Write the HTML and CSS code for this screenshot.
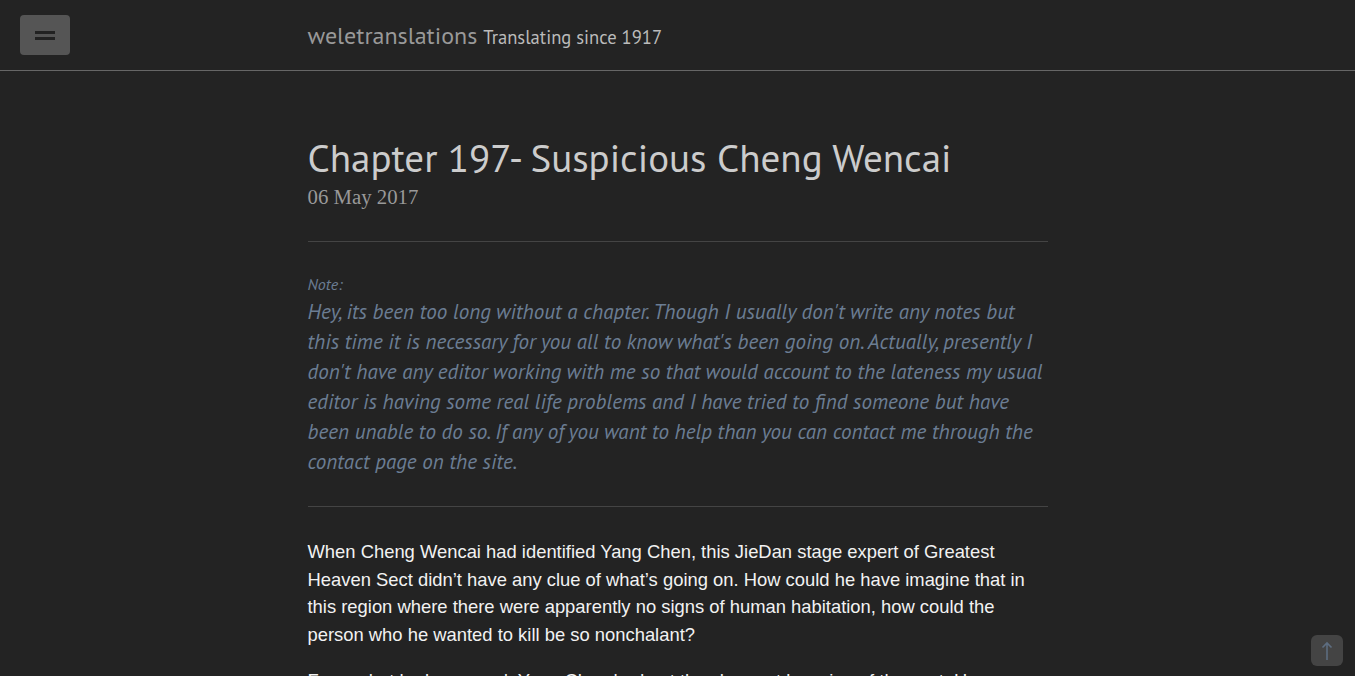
FILE: index.html
```html
<!DOCTYPE html>
<html lang="en">
<head>
<meta charset="utf-8">
<title>Chapter 197- Suspicious Cheng Wencai</title>
<link rel="stylesheet" href="styles.css">
</head>
<body>
<header class="site-header">
  <button class="menu-btn" aria-label="Menu"><span class="bar"></span><span class="bar"></span></button>
  <div class="wrap header-inner">
    <a class="brand" href="#">weletranslations</a>
    <span class="tagline">Translating since 1917</span>
  </div>
</header>
<main class="wrap post">
  <h1 class="post-title">Chapter 197- Suspicious Cheng Wencai</h1>
  <div class="post-date">06 May 2017</div>
  <hr class="rule">
  <section class="note">
    <div class="note-label">Note:</div>
    <p class="note-text">Hey, its been too long without a chapter. Though I usually don't write any notes but this time it is necessary for you all to know what's been going on. Actually, presently I don't have any editor working with me so that would account to the lateness my usual editor is having some real life problems and I have tried to find someone but have been unable to do so. If any of you want to help than you can contact me through the contact page on the site.</p>
  </section>
  <hr class="rule">
  <article class="content">
    <p>When Cheng Wencai had identified Yang Chen, this JieDan stage expert of Greatest Heaven Sect didn’t have any clue of what’s going on. How could he have imagine that in this region where there were apparently no signs of human habitation, how could the person who he wanted to kill be so nonchalant?</p>
    <p>From what he knew, and, Yang Chen had not the sharpest knowing of the sect. He was so expert he had left the other.</p>
  </article>
</main>
<a class="to-top" href="#" aria-label="Back to top">
  <svg width="12" height="20" viewBox="0 0 12 20"><path d="M6 19V2M1.5 6.5L6 2l4.5 4.5" fill="none" stroke="#5d6d80" stroke-width="1.6"/></svg>
</a>
</body>
</html>
```
FILE: styles.css
```css
html, body {
  margin: 0;
  padding: 0;
  background: #232323;
  height: 100%;
  overflow: hidden;
}
body {
  font-family: "PT Sans", "Liberation Sans Narrow", "Liberation Sans", sans-serif;
}
.wrap {
  width: 740px;
  margin: 0 auto;
}
.site-header {
  height: 70px;
  border-bottom: 1px solid #666;
  box-sizing: content-box;
}
.menu-btn {
  position: absolute;
  left: 20px;
  top: 15px;
  width: 50px;
  height: 40px;
  border: 0;
  border-radius: 4px;
  background: #555;
  display: flex;
  flex-direction: column;
  align-items: center;
  justify-content: center;
  gap: 3px;
  padding: 0;
}
.menu-btn .bar {
  display: block;
  width: 20px;
  height: 3px;
  background: #222;
}
.header-inner {
  display: flex;
  align-items: baseline;
  gap: 6px;
  padding-top: 20px;
}
.brand {
  font-size: 24px;
  color: #999;
  text-decoration: none;
}
.tagline {
  font-size: 18.6px;
  color: #bbb;
}
.post {
  padding-top: 64px;
}
.post-title {
  margin: 0;
  font-weight: normal;
  font-size: 39px;
  line-height: 46px;
  color: #ccc;
}
.post-date {
  font-family: "Liberation Serif", serif;
  font-size: 20.8px;
  color: #999;
  margin-top: 4px;
}
.rule {
  border: 0;
  border-top: 1px solid #444;
  margin: 32px 0 0;
}
.note {
  padding-top: 32px;
  padding-bottom: 29px;
  font-style: italic;
  color: #6b7d93;
}
.note-label {
  font-size: 16px;
  line-height: 20px;
  margin-bottom: 3px;
}
.note-text {
  margin: 0;
  font-size: 21.1px;
  line-height: 30px;
}
.note + .rule { margin-top: 0; }
.content {
  padding-top: 31px;
  font-family: "Liberation Sans", Arial, sans-serif;
  font-size: 18.4px;
  line-height: 27.7px;
  color: #f2f2f2;
}
.content p {
  margin: 0 0 18px;
}
.to-top {
  position: fixed;
  right: 12px;
  bottom: 10px;
  width: 32px;
  height: 31px;
  border-radius: 6px;
  background: #444;
  display: flex;
  align-items: center;
  justify-content: center;
}
```
